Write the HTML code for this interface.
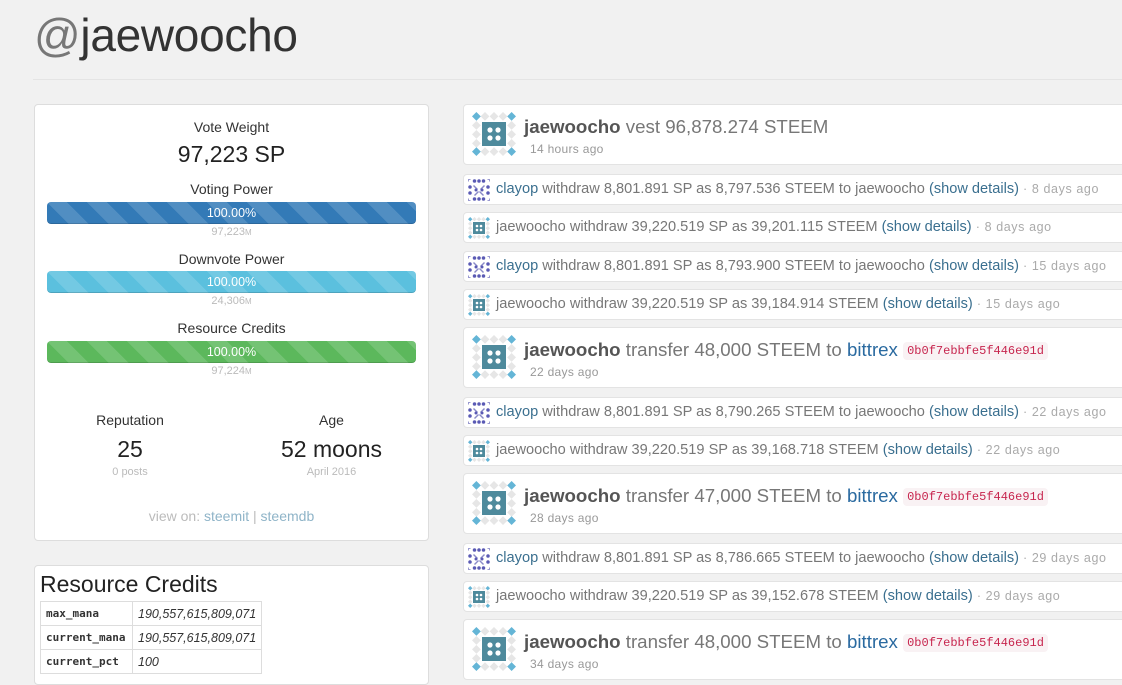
<!DOCTYPE html>
<html><head><meta charset="utf-8"><style>
*{box-sizing:border-box;margin:0;padding:0}
body{width:1122px;height:672px;overflow:hidden;background:#f1f1f1;font-family:"Liberation Sans",Arial,sans-serif;color:#333;position:relative}
.abs{position:absolute}
h1{position:absolute;left:34px;top:8px;font-size:46px;font-weight:normal;color:#333;letter-spacing:-0.3px}
h1 span{color:#777}
.hr{position:absolute;left:33px;top:79px;width:1089px;border-top:1px solid #e4e4e4}
.card{position:absolute;background:#fff;border:1px solid #ddd;border-radius:4px}
.c{text-align:center;position:absolute;left:0;width:100%}
.bar{position:absolute;left:12px;width:369px;height:22px;border-radius:4px;color:#fff;font-size:12.5px;line-height:22px;text-align:center;
background-image:linear-gradient(45deg,rgba(255,255,255,.15) 25%,transparent 25%,transparent 50%,rgba(255,255,255,.15) 50%,rgba(255,255,255,.15) 75%,transparent 75%,transparent);background-size:40px 40px;box-shadow:inset 0 -1px 0 rgba(0,0,0,.15)}
.sm{font-size:11px;color:#bbb}
.row{position:absolute;left:463px;width:680px;background:#fff;border:1px solid #e3e3e3;border-radius:4px}
.s{height:31px;font-size:14.6px;color:#777;line-height:29px;padding-left:32px;white-space:nowrap}
.s svg{position:absolute;left:4px;top:4px}
.b{height:61px}
.b svg{position:absolute;left:8px;top:7px}
.b .t{position:absolute;left:60px;top:11px;font-size:18.7px;color:#777;white-space:nowrap}
.b .t b{color:#555;font-weight:bold}
.b .ago{position:absolute;left:66px;top:37px;font-size:12px;color:#999;letter-spacing:.3px}
a{color:#3a6f8f;text-decoration:none}
.b a{color:#2a6aa0}
.ago2{color:#aaa;font-size:12.5px;letter-spacing:.6px}
code{font-family:"Liberation Mono",monospace;font-size:12px;color:#c7254e;background:#f9f2f4;border-radius:4px;padding:2px 4px;position:relative;top:-2px}
table{border-collapse:collapse;position:absolute;left:5px;top:35px}
td{border:1px solid #ddd;height:24px;padding:0 5px;font-size:12.5px}
td.k{font-family:"DejaVu Sans Mono","Liberation Mono",monospace;font-weight:bold;font-size:11px;width:92px;color:#333}
td.v{font-style:italic;width:128px;color:#333}
</style></head><body>
<svg width="0" height="0" style="position:absolute">
<defs>
<g id="jw">
<g fill="#e6e6e6">
<path d="M13 0l4.4 4.4-4.4 4.4-4.4-4.4zM22 0l4.4 4.4-4.4 4.4-4.4-4.4zM31 0l4.4 4.4-4.4 4.4-4.4-4.4zM4.4 9l4.4 4.4-4.4 4.4L0 13.4zM4.4 18l4.4 4.4-4.4 4.4L0 22.4zM4.4 27l4.4 4.4-4.4 4.4L0 31.4zM39.6 9l4.4 4.4-4.4 4.4-4.4-4.4zM39.6 18l4.4 4.4-4.4 4.4-4.4-4.4zM39.6 27l4.4 4.4-4.4 4.4-4.4-4.4zM13 35.2l4.4 4.4-4.4 4.4-4.4-4.4zM22 35.2l4.4 4.4-4.4 4.4-4.4-4.4zM31 35.2l4.4 4.4-4.4 4.4-4.4-4.4z"/>
</g>
<g fill="#64b5d6">
<path d="M4.4 0l4.4 4.4-4.4 4.4L0 4.4zM39.6 0l4.4 4.4-4.4 4.4-4.4-4.4zM4.4 35.2l4.4 4.4-4.4 4.4L0 39.6zM39.6 35.2l4.4 4.4-4.4 4.4-4.4-4.4z"/>
</g>
<rect x="10" y="10" width="24" height="24" fill="#4e8a9c"/>
<g fill="#fff"><circle cx="18" cy="18" r="2.6"/><circle cx="26" cy="18" r="2.6"/><circle cx="18" cy="26" r="2.6"/><circle cx="26" cy="26" r="2.6"/></g>
</g>
<g id="cl" fill="#5a5ab4">
<path d="M0 0h5v2H2v3H0zM44 0v5h-2V2h-3V0zM0 44v-5h2v3h3v2zM44 44h-5v-2h3v-3h2z" fill="#9a9ad0"/>
<circle cx="13" cy="4" r="3.5"/><circle cx="22" cy="4" r="3.5"/><circle cx="31" cy="4" r="3.5"/>
<circle cx="4" cy="16" r="3.5"/><circle cx="40" cy="16" r="3.5"/><circle cx="4" cy="28" r="3.5"/><circle cx="40" cy="28" r="3.5"/>
<circle cx="13" cy="40" r="3.5"/><circle cx="22" cy="40" r="3.5"/><circle cx="31" cy="40" r="3.5"/>
<path d="M12 12l8 8-2 2-8-8zM32 12l-8 8 2 2 8-8zM12 32l8-8 2 2-8 8zM32 32l-8-8-2 2 8 8z" fill="#8a8ac8"/>
<circle cx="16" cy="22" r="3"/><circle cx="28" cy="22" r="3"/>
</g>
</defs></svg>

<h1><span>@</span>jaewoocho</h1>
<div class="hr"></div>

<div class="card" style="left:34px;top:104px;width:395px;height:437px">
<div class="c" style="top:14px;font-size:14px">Vote Weight</div>
<div class="c" style="top:36px;font-size:23px;color:#222">97,223 SP</div>
<div class="c" style="top:76px;font-size:14px">Voting Power</div>
<div class="bar" style="top:97px;background-color:#337ab7">100.00%</div>
<div class="c sm" style="top:121px">97,223<small style="font-size:8px">M</small></div>
<div class="c" style="top:146px;font-size:14px">Downvote Power</div>
<div class="bar" style="top:166px;background-color:#5bc0de">100.00%</div>
<div class="c sm" style="top:190px">24,306<small style="font-size:8px">M</small></div>
<div class="c" style="top:215px;font-size:14px">Resource Credits</div>
<div class="bar" style="top:236px;background-color:#5cb85c">100.00%</div>
<div class="c sm" style="top:260px">97,224<small style="font-size:8px">M</small></div>
<div class="abs" style="left:0;width:190px;text-align:center;top:307px;font-size:14px">Reputation</div>
<div class="abs" style="left:0;width:190px;text-align:center;top:331px;font-size:23px;color:#222">25</div>
<div class="abs sm" style="left:0;width:190px;text-align:center;top:361px">0 posts</div>
<div class="abs" style="left:200px;width:193px;text-align:center;top:307px;font-size:14px">Age</div>
<div class="abs" style="left:200px;width:193px;text-align:center;top:331px;font-size:23px;color:#222">52 moons</div>
<div class="abs sm" style="left:200px;width:193px;text-align:center;top:361px">April 2016</div>
<div class="c" style="top:403px;font-size:14px;color:#bbb">view on: <span style="color:#8fb4c8">steemit</span> | <span style="color:#8fb4c8">steemdb</span></div>
</div>

<div class="card" style="left:34px;top:565px;width:395px;height:120px">
<div class="abs" style="left:5px;top:5px;font-size:23px;color:#222">Resource Credits</div>
<table>
<tr><td class="k">max_mana</td><td class="v">190,557,615,809,071</td></tr>
<tr><td class="k">current_mana</td><td class="v">190,557,615,809,071</td></tr>
<tr><td class="k">current_pct</td><td class="v">100</td></tr>
</table>
</div>

<div class="row b" style="top:104px"><svg width="44" height="44"><use href="#jw"/></svg><div class="t"><b>jaewoocho</b> vest 96,878.274 STEEM</div><div class="ago">14 hours ago</div></div>

<div class="row s" style="top:174px"><svg width="22" height="22" viewBox="0 0 44 44"><use href="#cl"/></svg><a>clayop</a> withdraw 8,801.891 SP as 8,797.536 STEEM to jaewoocho <a>(show details)</a> <span class="ago2">· 8 days ago</span></div>
<div class="row s" style="top:212px"><svg width="22" height="22" viewBox="0 0 44 44"><use href="#jw"/></svg>jaewoocho withdraw 39,220.519 SP as 39,201.115 STEEM <a>(show details)</a> <span class="ago2">· 8 days ago</span></div>
<div class="row s" style="top:251px"><svg width="22" height="22" viewBox="0 0 44 44"><use href="#cl"/></svg><a>clayop</a> withdraw 8,801.891 SP as 8,793.900 STEEM to jaewoocho <a>(show details)</a> <span class="ago2">· 15 days ago</span></div>
<div class="row s" style="top:289px"><svg width="22" height="22" viewBox="0 0 44 44"><use href="#jw"/></svg>jaewoocho withdraw 39,220.519 SP as 39,184.914 STEEM <a>(show details)</a> <span class="ago2">· 15 days ago</span></div>

<div class="row b" style="top:327px"><svg width="44" height="44"><use href="#jw"/></svg><div class="t"><b>jaewoocho</b> transfer 48,000 STEEM to <a>bittrex</a> <code>0b0f7ebbfe5f446e91d</code></div><div class="ago">22 days ago</div></div>

<div class="row s" style="top:397px"><svg width="22" height="22" viewBox="0 0 44 44"><use href="#cl"/></svg><a>clayop</a> withdraw 8,801.891 SP as 8,790.265 STEEM to jaewoocho <a>(show details)</a> <span class="ago2">· 22 days ago</span></div>
<div class="row s" style="top:435px"><svg width="22" height="22" viewBox="0 0 44 44"><use href="#jw"/></svg>jaewoocho withdraw 39,220.519 SP as 39,168.718 STEEM <a>(show details)</a> <span class="ago2">· 22 days ago</span></div>

<div class="row b" style="top:473px"><svg width="44" height="44"><use href="#jw"/></svg><div class="t"><b>jaewoocho</b> transfer 47,000 STEEM to <a>bittrex</a> <code>0b0f7ebbfe5f446e91d</code></div><div class="ago">28 days ago</div></div>

<div class="row s" style="top:543px"><svg width="22" height="22" viewBox="0 0 44 44"><use href="#cl"/></svg><a>clayop</a> withdraw 8,801.891 SP as 8,786.665 STEEM to jaewoocho <a>(show details)</a> <span class="ago2">· 29 days ago</span></div>
<div class="row s" style="top:581px"><svg width="22" height="22" viewBox="0 0 44 44"><use href="#jw"/></svg>jaewoocho withdraw 39,220.519 SP as 39,152.678 STEEM <a>(show details)</a> <span class="ago2">· 29 days ago</span></div>

<div class="row b" style="top:619px"><svg width="44" height="44"><use href="#jw"/></svg><div class="t"><b>jaewoocho</b> transfer 48,000 STEEM to <a>bittrex</a> <code>0b0f7ebbfe5f446e91d</code></div><div class="ago">34 days ago</div></div>
</body></html>
